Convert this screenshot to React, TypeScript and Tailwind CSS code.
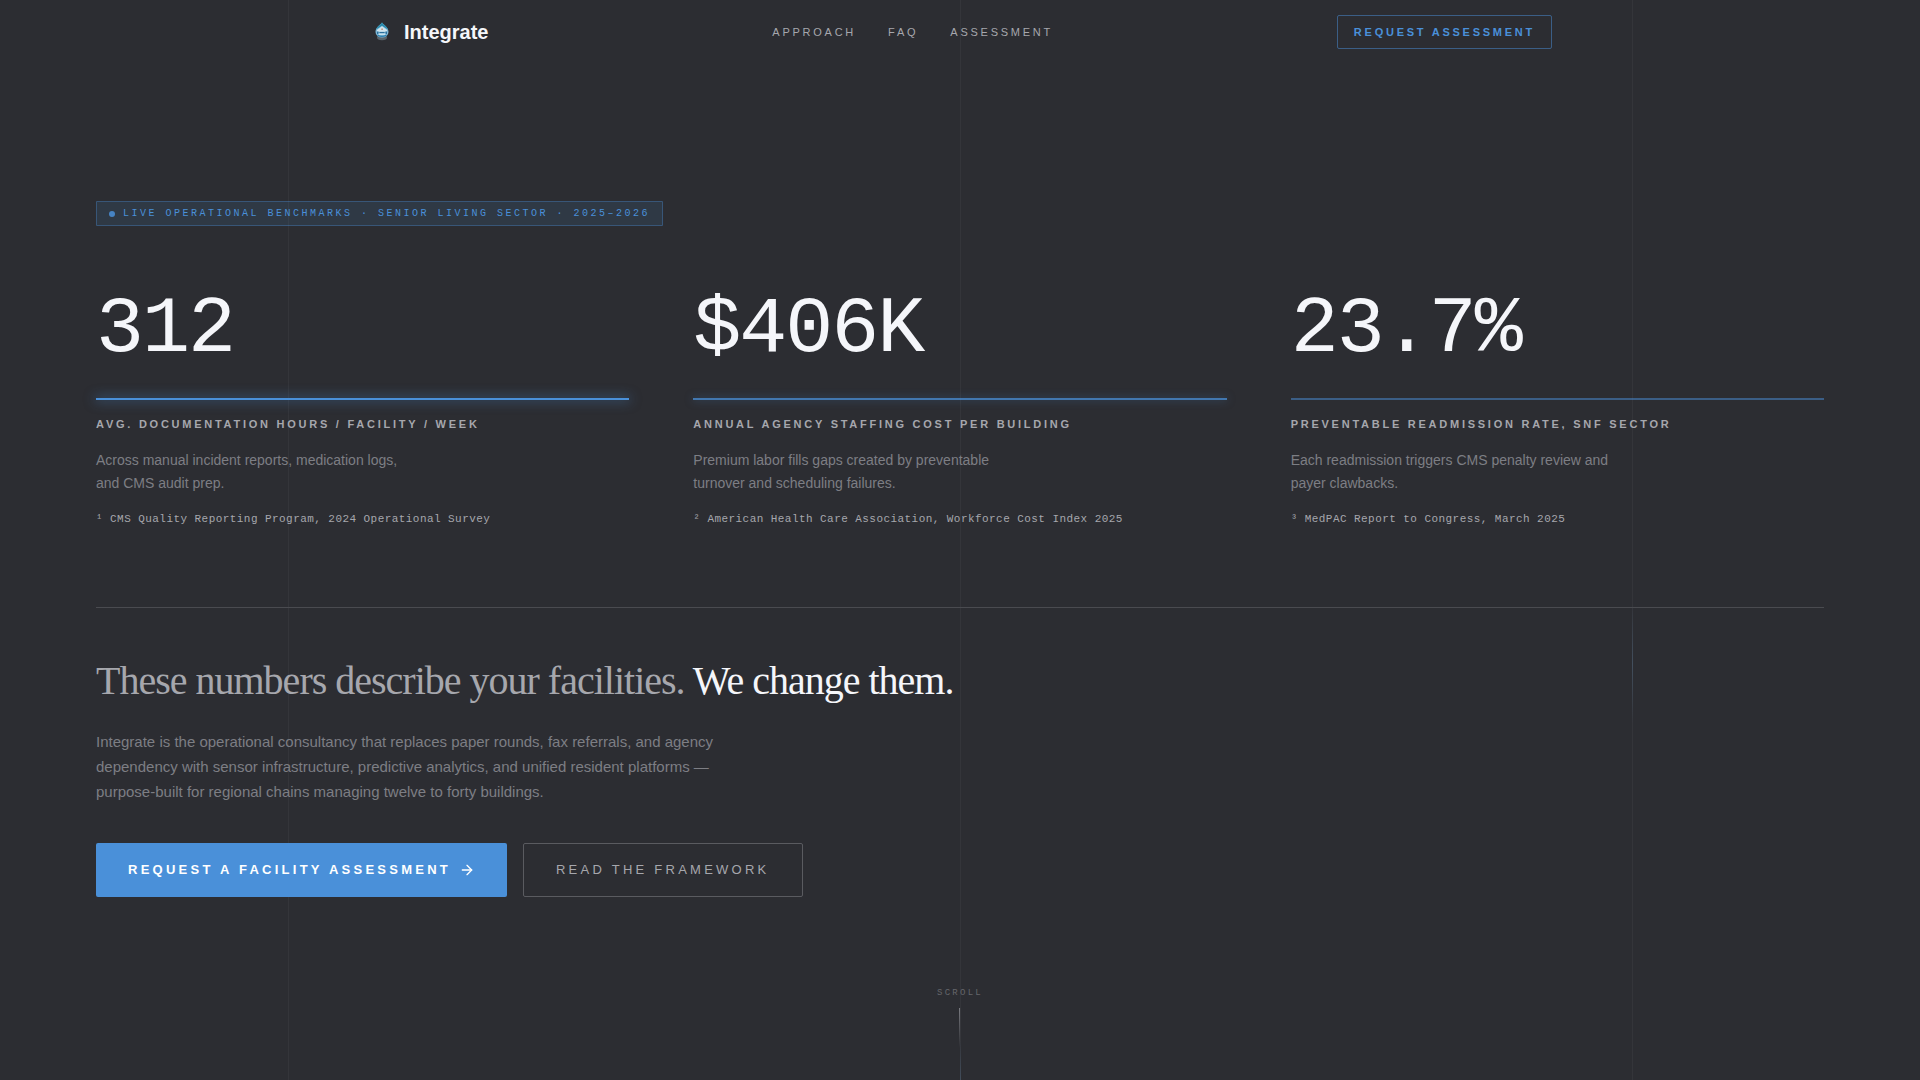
import { ArrowRight } from "lucide-react";

const NAV_LINKS = [
  { label: "Approach", href: "#approach" },
  { label: "FAQ", href: "#faq" },
  { label: "Assessment", href: "#assessment" },
];

const STATS = [
  {
    value: "312",
    label: "Avg. Documentation Hours / Facility / Week",
    desc: ["Across manual incident reports, medication logs,", "and CMS audit prep."],
    source: "¹ CMS Quality Reporting Program, 2024 Operational Survey",
    bar: "bg-[#4a90d9] shadow-[0_0_12px_1px_rgba(74,144,217,0.55)]",
  },
  {
    value: "$406K",
    label: "Annual Agency Staffing Cost Per Building",
    desc: ["Premium labor fills gaps created by preventable", "turnover and scheduling failures."],
    source: "² American Health Care Association, Workforce Cost Index 2025",
    bar: "bg-[#4a90d9]/75 shadow-[0_0_8px_rgba(74,144,217,0.5)]",
  },
  {
    value: "23.7%",
    label: "Preventable Readmission Rate, SNF Sector",
    desc: ["Each readmission triggers CMS penalty review and", "payer clawbacks."],
    source: "³ MedPAC Report to Congress, March 2025",
    bar: "bg-[#4a90d9]/50",
  },
];

function Logo() {
  return (
    <svg width="28" height="28" viewBox="0 0 28 28" aria-hidden="true">
      <ellipse cx="14" cy="19.500" rx="5" ry="2.800" fill="#59646c" />
      <path d="M14 4.500C15.500 7 20.500 9 20.500 14a6.500 5.500 0 0 1-13 0C7.500 9 12.500 7 14 4.500z" fill="#7fb9d8" />
      <path d="M14 4.500c1.400 2.300 5 4 6.200 7.200L14 7.800l-6.200 3.900C9 8.500 12.600 6.800 14 4.500z" fill="#2a89ab" />
      <path d="M14 8.300l5 3.700v1.700H9V12z" fill="#cfe3ed" />
      <path d="M13.200 10.500h1.800v1.500h-1.800z" fill="#c39a86" />
      <path d="M9 13.500h1.500v2.500H9zM17.500 13.500H19v2.500h-1.500zM11.500 14h5v1.200h-5z" fill="#2a6f9d" />
      <path d="M10.500 15.500h7v1.300h-7z" fill="#d9eaf2" />
      <path d="M9.500 17c2.500 1.600 6.500 1.600 9 0" fill="none" stroke="#2f7fae" strokeWidth="1.200" />
    </svg>
  );
}

function BackgroundLines() {
  return (
    <div className="absolute inset-0 overflow-hidden pointer-events-none" aria-hidden="true">
      <div className="absolute inset-y-0 left-[15%] w-px bg-white/4" />
      <div className="absolute inset-y-0 left-1/2 w-px bg-white/4" />
      <div className="absolute inset-y-0 left-[85%] w-px bg-white/4" />
      {/* travelling pulses */}
      <div className="absolute top-[1040px] left-1/2 w-px h-30 bg-linear-to-b from-transparent via-[#6f9cc8]/35 to-transparent" />
      <div className="absolute top-[604px] left-[85%] w-px h-30 bg-linear-to-b from-transparent via-[#6f9cc8]/25 to-transparent" />
    </div>
  );
}

function Header() {
  return (
    <header className="relative z-10 w-full max-w-7xl mx-auto h-16 px-12 flex items-center justify-between">
      <a href="#top" className="flex items-center gap-2">
        <Logo />
        <span className="text-xl font-bold text-[#f5f6fa]">Integrate</span>
      </a>
      <nav className="flex items-center gap-8">
        {NAV_LINKS.map((link) => (
          <a key={link.label} href={link.href} className="text-[11px] leading-4 uppercase tracking-[0.25em] text-[#a6a7ad]">
            {link.label}
          </a>
        ))}
      </nav>
      <button
        type="button"
        className="px-4 py-2 border border-[#4a90d9]/50 rounded-xs text-[11px] leading-4 font-bold uppercase tracking-[0.25em] text-[#4a90d9]"
      >
        Request Assessment
      </button>
    </header>
  );
}

export default function App() {
  return (
    <div
      id="top"
      className="relative min-h-screen flex flex-col bg-[#2c2d32] antialiased"
      style={{ fontFamily: '"Liberation Sans", Arial, sans-serif' }}
    >
      <BackgroundLines />
      <Header />

      <main className="relative flex-1 px-24 pt-[137px] pb-40">
        {/* Eyebrow badge */}
        <div className="inline-flex items-center gap-2 px-3 py-1 align-top border border-[#4a90d9]/35 bg-[#4a90d9]/12 rounded-[1px]">
          <span className="size-1.5 rounded-full bg-[#4a90d9]/85" />
          <span className="font-['Liberation_Mono',monospace] text-[10px] leading-[15px] uppercase tracking-[0.25em] text-[#4a90d9]">
            Live Operational Benchmarks · Senior Living Sector · 2025–2026
          </span>
        </div>

        {/* Benchmark columns */}
        <section className="grid grid-cols-3 gap-16 mt-16 pb-20 border-b border-[#4a4b50]">
          {STATS.map((stat) => (
            <article key={stat.value}>
              <p className="font-['Liberation_Mono',monospace] text-[80px] leading-none tracking-tight text-[#f5f6fa]">
                {stat.value}
              </p>
              <div className={`h-0.5 mt-7 ${stat.bar}`} />
              <h2 className="mt-4 text-[11px] leading-[17px] font-bold uppercase tracking-[0.25em] text-[#a6a7ad]">{stat.label}</h2>
              <p className="mt-4 text-sm leading-[23px] text-[#7d7e84]">
                {stat.desc[0]}
                <br />
                {stat.desc[1]}
              </p>
              <p className="mt-4 font-['Liberation_Mono',monospace] text-[11px] leading-4 tracking-[0.04em] text-[#a6a7ad]">
                {stat.source}
              </p>
            </article>
          ))}
        </section>

        <section className="mt-12">
          <h1 className="font-['Liberation_Serif',serif] text-[40px] leading-[50px] tracking-tight text-[#a6a7ad]">
            These numbers describe your facilities. <span className="text-[#f5f6fa]">We change them.</span>
          </h1>
          <p className="mt-[23px] max-w-[640px] text-[15px] leading-[25px] text-[#7d7e84]">
            Integrate is the operational consultancy that replaces paper rounds, fax referrals, and agency dependency with
            sensor infrastructure, predictive analytics, and unified resident platforms — purpose-built for regional chains
            managing twelve to forty buildings.
          </p>
          <div className="flex gap-4 mt-[39px]">
            <button
              type="button"
              className="flex items-center gap-2 px-8 py-[17px] rounded-xs bg-[#4a90d9] text-[13px] leading-5 font-bold uppercase tracking-[0.25em] text-white"
            >
              Request a Facility Assessment
              <ArrowRight size={16} strokeWidth={2} />
            </button>
            <button
              type="button"
              className="px-8 py-4 border border-[#5a5b60] rounded-xs text-[13px] leading-5 uppercase tracking-[0.25em] text-[#a6a7ad]"
            >
              Read the Framework
            </button>
          </div>
        </section>
      </main>

      {/* Scroll hint */}
      <div className="absolute bottom-8 left-1/2 -translate-x-1/2 flex flex-col items-center gap-2">
        <span className="font-['Liberation_Mono',monospace] text-[9px] leading-[14px] uppercase tracking-[0.25em] text-[#65666b]">
          Scroll
        </span>
        <div className="w-px h-10 bg-linear-to-b from-[#7d7e84] to-transparent" />
      </div>
    </div>
  );
}
